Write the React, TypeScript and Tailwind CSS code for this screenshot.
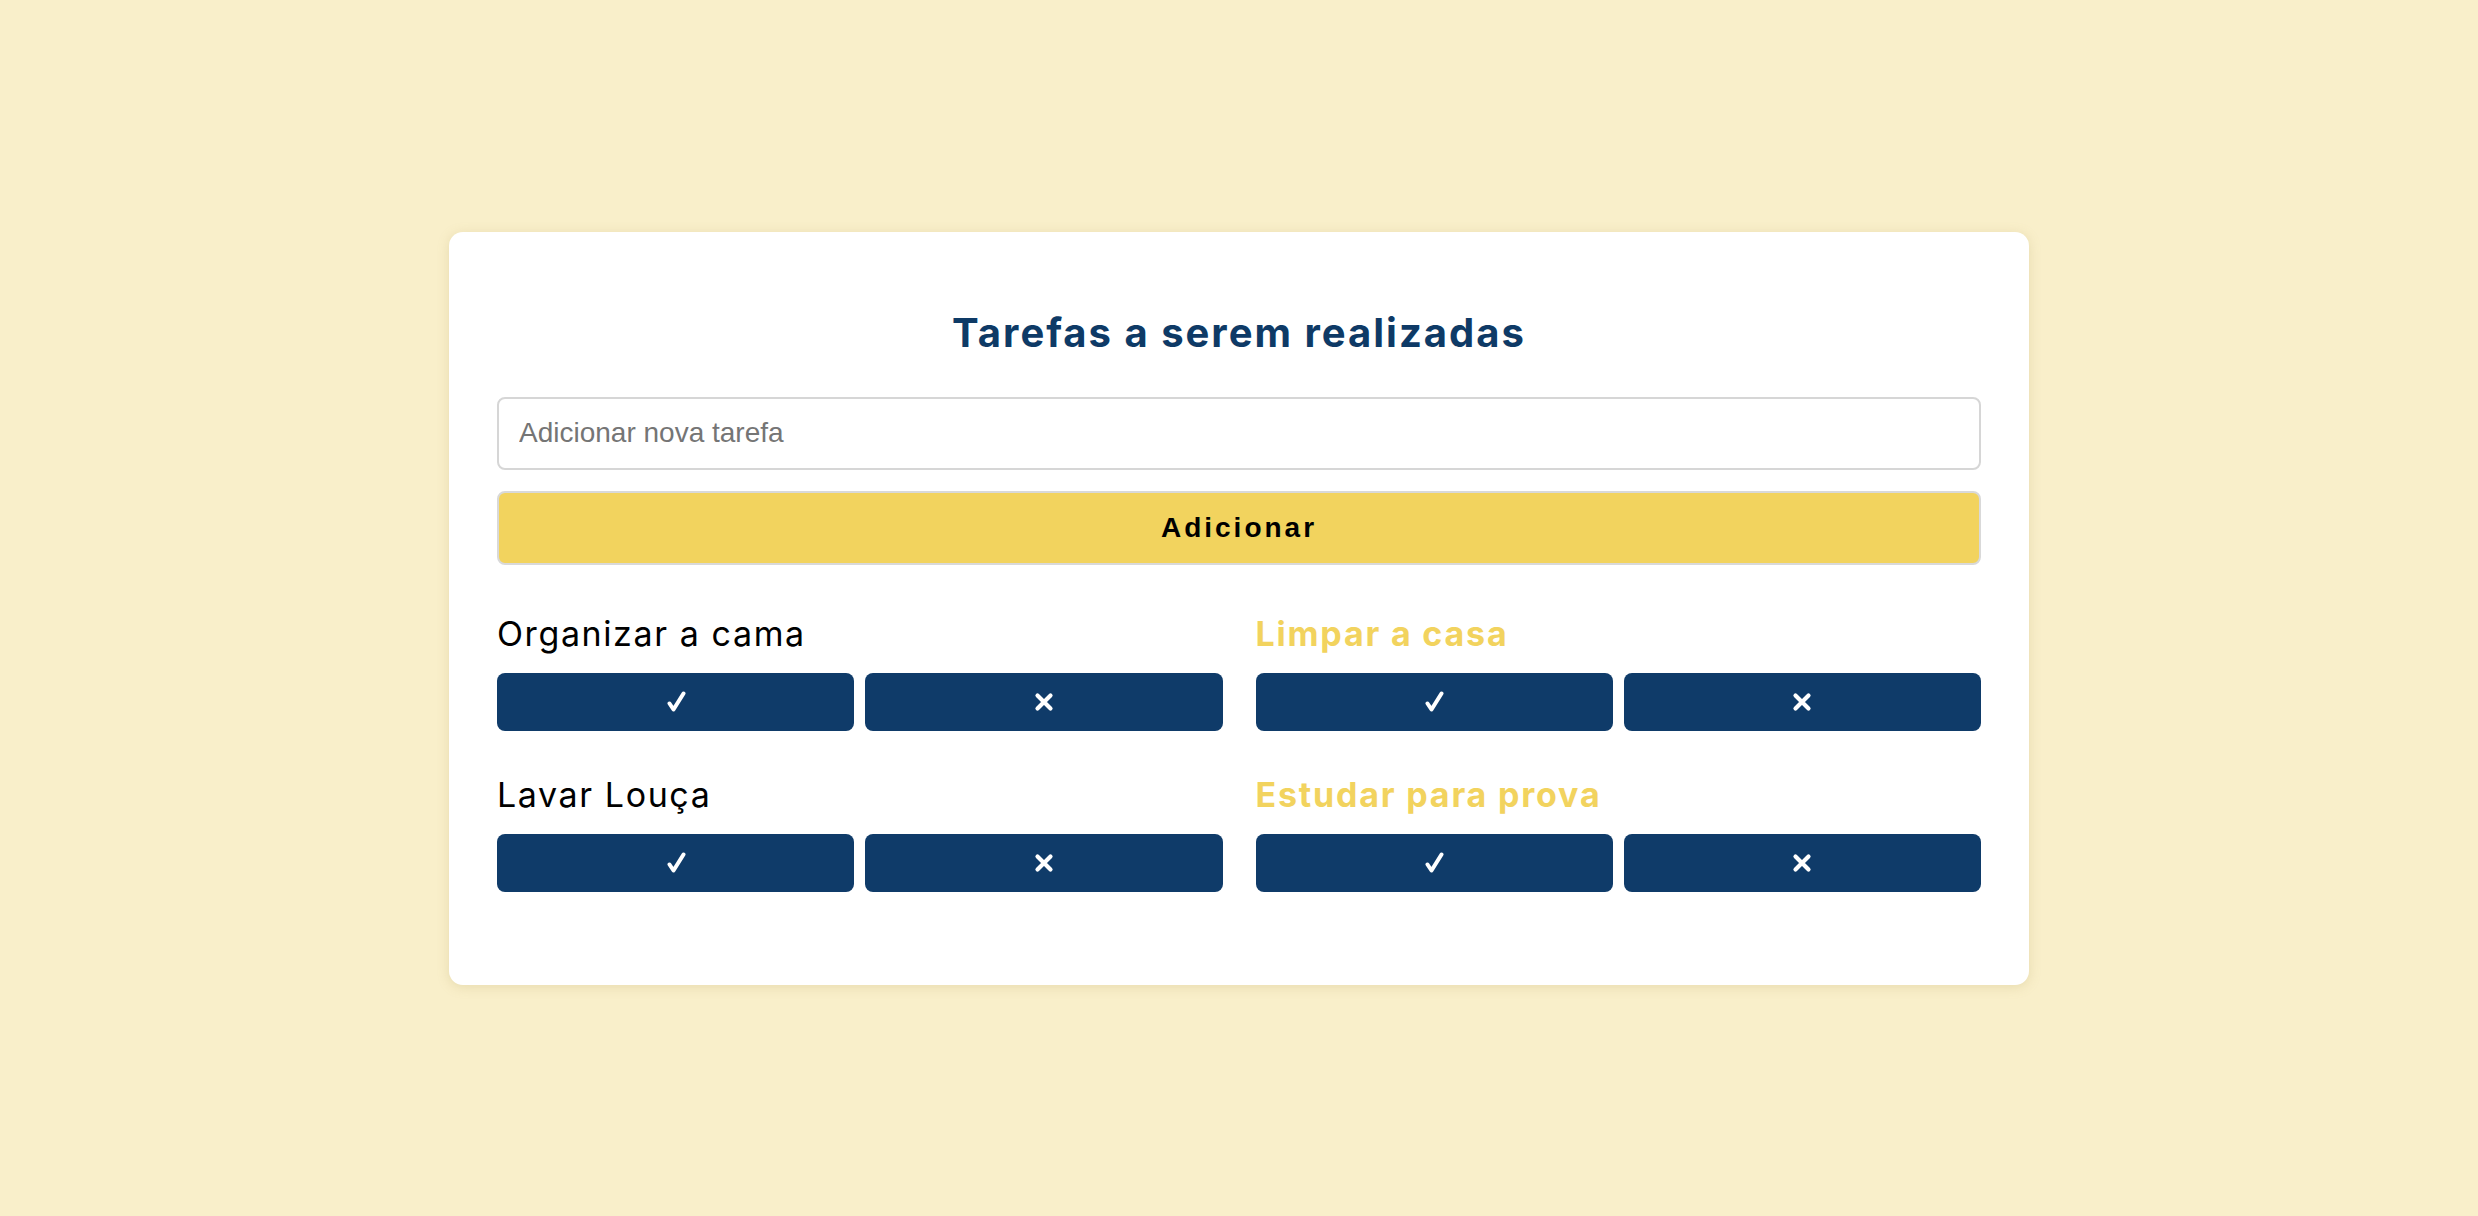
import { useState } from "react";

interface Task {
  id: number;
  title: string;
  done: boolean;
}

const initialTasks: Task[] = [
  { id: 1, title: "Organizar a cama", done: false },
  { id: 2, title: "Limpar a casa", done: true },
  { id: 3, title: "Lavar Louça", done: false },
  { id: 4, title: "Estudar para prova", done: true },
];

const CheckIcon = () => (
  <svg width="20" height="21" viewBox="0 0 20 21" fill="none">
    <path
      d="M3.5 12.5 L7.5 18.5 L17.5 2.5"
      stroke="white"
      strokeWidth="4"
      strokeLinecap="round"
      strokeLinejoin="round"
    />
  </svg>
);

const CrossIcon = () => (
  <svg width="20" height="20" viewBox="0 0 20 20" fill="none">
    <path
      d="M3.5 3.5 L16.5 16.5 M16.5 3.5 L3.5 16.5"
      stroke="white"
      strokeWidth="4.2"
      strokeLinecap="round"
    />
  </svg>
);

const TaskItem = ({ title, done }: Task) => {
  return (
    <div className="flex flex-col">
      <p
        className={`mt-[2px] text-[34px] leading-[40px] ${
          done ? "text-[#f2d35e] font-bold tracking-[1.8px]" : "text-black font-normal tracking-[1.6px]"
        }`}
      >
        {title}
      </p>
      <div className="mt-[19px] grid grid-cols-2 gap-[11px]">
        <button className="h-[58px] rounded-lg bg-[#0f3b69] flex items-center justify-center">
          <CheckIcon />
        </button>
        <button className="h-[58px] rounded-lg bg-[#0f3b69] flex items-center justify-center">
          <CrossIcon />
        </button>
      </div>
    </div>
  );
};

export default function App() {
  const [tasks] = useState<Task[]>(initialTasks);

  return (
    <div
      className="min-h-screen w-full bg-[#f9efca] flex items-center justify-center"
      style={{ fontFamily: "Inter, 'Noto Sans', sans-serif" }}
    >
      <div className="w-[1580px] bg-white rounded-[14px] shadow-[0_2px_12px_rgba(180,160,90,0.25)] px-12 pt-[77px] pb-[93px]">
        <h1 className="text-center text-[40px] leading-[48px] font-bold text-[#0e3a66] tracking-[2px]">
          Tarefas a serem realizadas
        </h1>

        <div className="mt-10 flex flex-col gap-[21px]">
          <input
            type="text"
            placeholder="Adicionar nova tarefa"
            className="h-[73px] w-full rounded-lg border-2 border-[#d6d6d6] bg-white px-[20px] text-[28px] text-black placeholder:text-[#757575] outline-none"
            style={{ fontFamily: "'Liberation Sans', Arial, sans-serif" }}
          />
          <button
            className="h-[74px] w-full rounded-lg border-2 border-[#d9d9d9] bg-[#f2d35e] text-[28px] font-bold tracking-[3px] text-black"
            style={{ fontFamily: "'Liberation Sans', Arial, sans-serif" }}
          >
            Adicionar
          </button>
        </div>

        <div className="mt-[47px] grid grid-cols-2 gap-x-[33px] gap-y-[42px]">
          {tasks.map((task) => (
            <TaskItem key={task.id} {...task} />
          ))}
        </div>
      </div>
    </div>
  );
}
